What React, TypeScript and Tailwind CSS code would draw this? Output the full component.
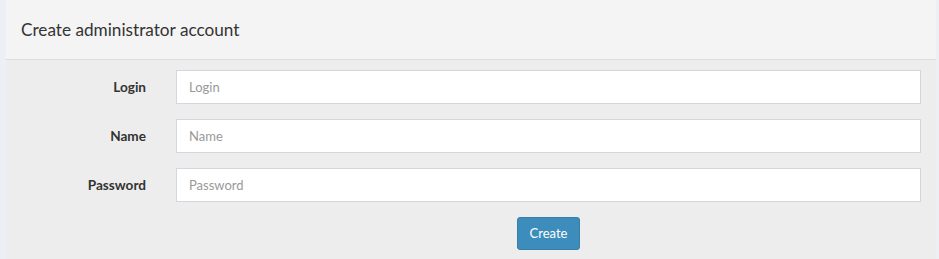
export default function App() {
  const fields = ['Login', 'Name', 'Password'];
  return (
    <div className="w-[939px] h-[259px] bg-[#ecf0f5] pl-[6px] pr-[3px] font-['Lato','Noto_Sans',sans-serif] text-[#333]">
      <div className="h-full bg-[#ededed] flex flex-col">
        <div className="h-[60px] bg-[#f4f4f4] border-b border-[#dcdcdc] flex items-center px-[15px]">
          <h3 className="text-[17.2px] text-[#333] leading-none">Create administrator account</h3>
        </div>
        <form className="flex flex-col gap-[15px] pt-[10px] pr-[15px]">
          {fields.map((f) => (
            <div key={f} className="flex items-center gap-[30px]">
              <label className="w-[140px] text-right text-[13.6px] font-bold text-[#333]">{f}</label>
              <input
                type={f === 'Password' ? 'password' : 'text'}
                placeholder={f}
                className="flex-1 h-[34px] bg-white border border-[#d2d6de] px-[12px] text-[13px] placeholder:text-[#999] outline-none"
              />
            </div>
          ))}
          <div className="flex pl-[170px]">
            <div className="flex-1 flex justify-center">
              <button type="button" className="w-[63px] h-[33px] bg-[#3c8dbc] border border-[#367fa9] rounded-[3px] text-white text-[13px]">
                Create
              </button>
            </div>
          </div>
        </form>
      </div>
    </div>
  );
}
